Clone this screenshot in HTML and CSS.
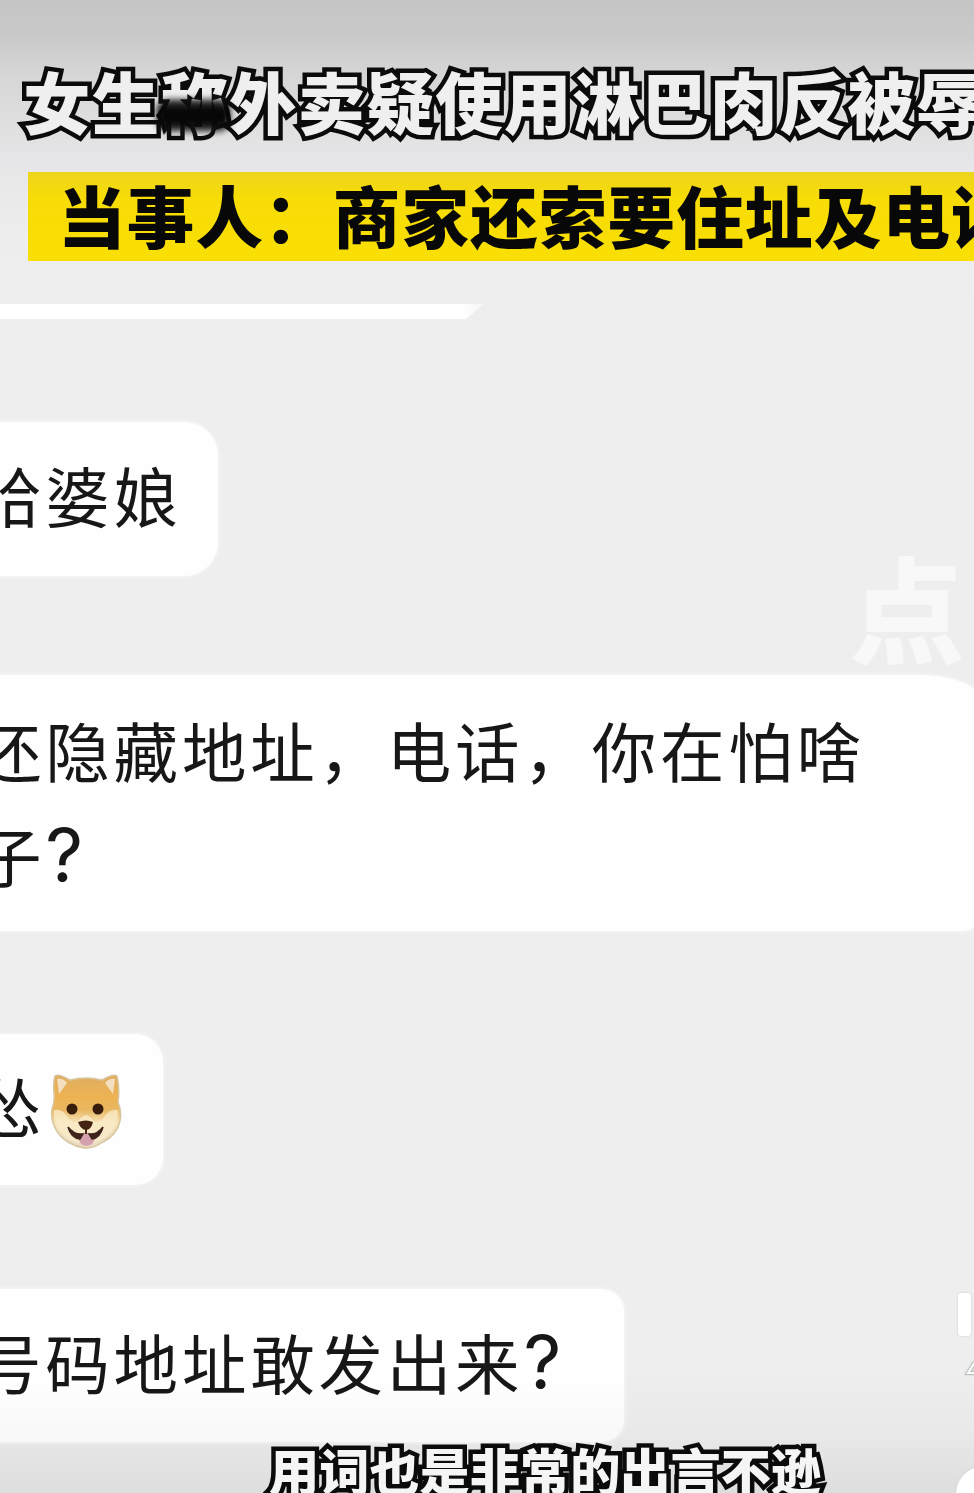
FILE: index.html
```html
<!DOCTYPE html>
<html lang="zh-CN">
<head>
<meta charset="utf-8">
<title>女生称外卖疑使用淋巴肉反被辱</title>
<link rel="stylesheet" href="styles.css">
</head>
<body>
<main class="screen">
  <header class="header">
    <h1 class="headline">女生<span class="smudged">称<i class="smudge"></i></span>外卖疑使用淋巴肉反被辱</h1>
    <p class="banner">当事人：商家还索要住址及电话</p>
  </header>
  <div class="sliver"></div>
  <section class="chat">
    <div class="bubble bubble-a">哈婆娘</div>
    <div class="bubble bubble-b">还隐藏地址，电话，你在怕啥<br>子<span class="mark">?</span></div>
    <div class="bubble bubble-c">怂
      <svg class="dog" viewBox="0 0 72 76">
        <defs>
          <linearGradient id="fur" x1="0" y1="0" x2="0" y2="1">
            <stop offset="0" stop-color="#dfae62"/>
            <stop offset=".3" stop-color="#eeb252"/>
            <stop offset=".48" stop-color="#e9b762"/>
            <stop offset=".65" stop-color="#f7e3b6"/>
            <stop offset="1" stop-color="#e6d9c4"/>
          </linearGradient>
        </defs>
        <path d="M5 3Q8 0 20 7Q36 3 52 7Q64 0 67 3Q70 16 68 29Q72 38 70 48Q67 62 53 69Q43 76 34 75Q17 72 8 60Q0 48 2 36Q5 28 4 20Q3 9 5 3Z" fill="url(#fur)" stroke="#d7c6a0" stroke-width="1.5"/>
        <path d="M7 6Q13 5 17 10L9 21ZM65 6Q59 5 55 10L63 21Z" fill="#f4dfc0"/>
        <path d="M4 37Q13 35 19 46Q26 53 31 45Q36 39 41 45Q46 53 53 46Q59 35 68 37Q69 58 49 68Q35 74 20 67Q3 57 4 37Z" fill="#f9eccb" opacity=".75"/>
        <path d="M28 62Q36 57 45 62Q45 73 36 73Q29 73 28 62Z" fill="#d5a0ae"/>
        <path d="M18 54Q24 62 33 61L30 66Q21 65 18 54ZM53 54Q47 62 39 61L42 66Q50 65 53 54Z" fill="#3f241b" stroke="#3f241b" stroke-width="1.5"/>
        <ellipse cx="22" cy="36" rx="5.5" ry="5.5" fill="#391d0c"/>
        <ellipse cx="48" cy="36" rx="5.5" ry="5.5" fill="#391d0c"/>
        <path d="M28 49Q36 46 43 49Q41 57 36 57Q31 57 28 49Z" fill="#442313"/>
        <path d="M36 56V61" stroke="#442313" stroke-width="2"/>
      </svg>
    </div>
    <div class="bubble bubble-d">号码地址敢发出来<span class="mark">?</span></div>
  </section>
  <div class="watermark">点</div>
  <svg class="controls" viewBox="0 0 24 213">
    <rect x="8" y="13" width="13" height="43" rx="3" fill="#fff"/>
    <path d="M25 82L18 93H25" fill="none" stroke="#b8c4bb" stroke-width="4"/>
    <path d="M25 82L18 93H25" fill="none" stroke="#fff" stroke-width="2"/>
    <circle cx="34" cy="214" r="28" fill="#fff"/>
  </svg>
  <p class="subtitle">用词也是非常的出言不逊</p>
</main>
</body>
</html>
```
FILE: styles.css
```css
* { box-sizing: border-box; }

body { margin: 0; }

.screen {
  position: relative;
  display: flex;
  flex-direction: column;
  width: 974px;
  height: 1493px;
  overflow: hidden;
  white-space: nowrap;
  font-family: "Noto Sans CJK SC", sans-serif;
  background: linear-gradient(#c4c4c4 0, #c9c9c9 35px, #d6d6d6 75px, #dededf 120px, #e6e6e8 160px, #ededed 230px, #eeeeee 300px, #eeeeee 1370px, #e9e9e9 1430px, #dedede 1493px);
}

.header { display: flex; flex-direction: column; }

.headline {
  margin: 60px 0 0 23px;
  font-size: 67.5px;
  letter-spacing: 1.2px;
  line-height: 80px;
  font-weight: 900;
  color: #efefef;
  -webkit-text-stroke: 9px #0b0b0b;
  paint-order: stroke fill;
}

.smudged { position: relative; }

.smudge {
  position: absolute;
  left: -3px;
  top: 48px;
  width: 73px;
  height: 33px;
  border-radius: 12px;
  background: linear-gradient(#1c1c1ccc, #050505 30%, #080808 75%, #1c1c1cbb);
  filter: blur(3px);
}

.banner {
  margin: 32px 0 0 28px;
  padding: 0 0 6px 30px;
  font-size: 67.5px;
  letter-spacing: 1.2px;
  line-height: 83px;
  font-weight: 900;
  color: #080808;
  background: linear-gradient(#eed51d, #f7dc06 30%, #fadf04);
}

.sliver {
  width: 484px;
  height: 15px;
  margin-top: 43px;
  background: linear-gradient(90deg, #fff 462px, #f4f4f4);
  clip-path: polygon(0 0, 100% 0, 466px 100%, 0 100%);
}

.chat {
  display: flex;
  flex-direction: column;
  align-items: flex-start;
  margin-top: 103px;
}

.bubble {
  margin-left: -23px;
  font-size: 64.5px;
  letter-spacing: 3.8px;
  color: #171717;
  background: #fefefe;
  box-shadow: 0 0 4px #fbfbfb;
}

.bubble-a {
  width: 241px;
  height: 154px;
  padding-top: 22px;
  line-height: 100px;
  border-radius: 0 34px 34px 0;
}

.bubble-b {
  width: 1001px;
  height: 256px;
  margin-top: 99px;
  padding-top: 22px;
  line-height: 105px;
  border-radius: 0 60px 16px 0 / 0 22px 14px 0;
}

.bubble-c {
  display: flex;
  align-items: flex-start;
  width: 186px;
  height: 151px;
  margin-top: 103px;
  padding-top: 21px;
  line-height: 100px;
  border-radius: 0 28px 28px 0;
}

.bubble-d {
  width: 647px;
  height: 153px;
  margin-top: 104px;
  padding-top: 22px;
  line-height: 100px;
  border-radius: 0 22px 22px 0;
  background: linear-gradient(#fefefe 60%, #f8f8f8);
}

.mark {
  font-family: Inter, sans-serif;
  font-size: 74px;
  line-height: 1;
  letter-spacing: 0;
}

.dog {
  width: 72px;
  height: 76px;
  margin: 18px 0 0 5px;
}

.watermark {
  position: absolute;
  left: 850px;
  top: 542px;
  font-size: 114px;
  line-height: 126px;
  font-weight: 700;
  color: #f8f8f8;
  -webkit-text-stroke: 2px #f8f8f8;
}

.controls {
  position: absolute;
  left: 950px;
  top: 1280px;
  width: 24px;
  height: 213px;
  filter: drop-shadow(0 0 1px #ccc);
}

.subtitle {
  position: absolute;
  left: 269px;
  top: 1437px;
  margin: 0;
  font-size: 50.2px;
  line-height: 64px;
  font-weight: 900;
  color: #f5f5f5;
  -webkit-text-stroke: 9px #0b0b0b;
  paint-order: stroke fill;
}
```
